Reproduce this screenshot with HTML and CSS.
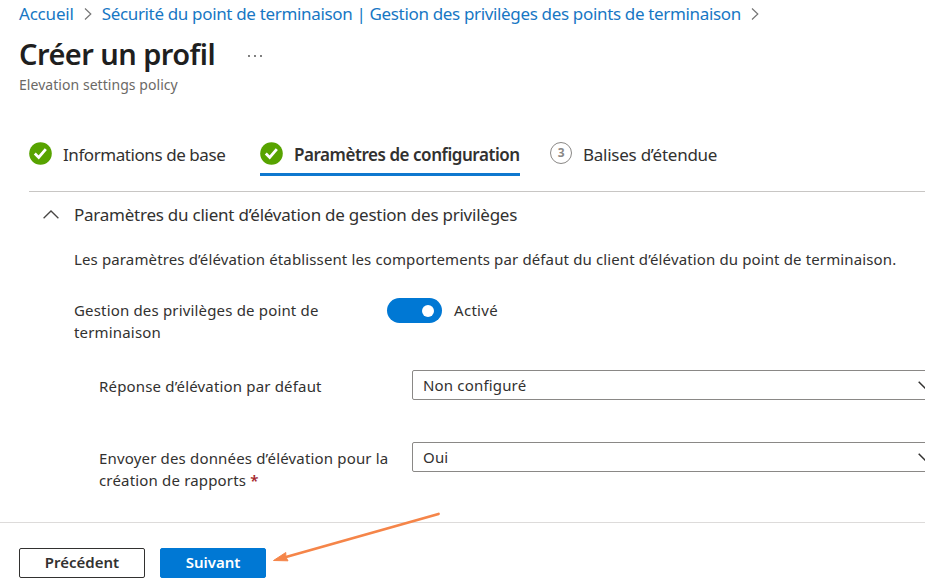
FILE: index.html
```html
<!DOCTYPE html>
<html lang="fr">
<head>
    <meta charset="UTF-8">
    <meta name="viewport" content="width=device-width, initial-scale=1.0">
    <title>Créer un profil</title>
    <link rel="stylesheet" href="styles.css">
</head>
<body>
<div class="page">
    <nav class="breadcrumb">
        <a class="crumb-home" href="#">Accueil</a>
        <svg class="sep" width="8" height="12" viewBox="0 0 8 12"><path d="M1 0.5L6.8 6L1 11.5"/></svg>
        <a class="crumb-long" href="#">Sécurité du point de terminaison | Gestion des privilèges des points de terminaison</a>
        <svg class="sep" width="8" height="12" viewBox="0 0 8 12"><path d="M1 0.5L6.8 6L1 11.5"/></svg>
    </nav>

    <header class="header">
        <div class="title-row">
            <h1>Créer un profil</h1>
            <svg class="more" width="16" height="4" viewBox="0 0 16 4"><circle cx="2" cy="2" r="0.9"/><circle cx="8" cy="2" r="0.9"/><circle cx="14" cy="2" r="0.9"/></svg>
        </div>
        <p class="subtitle">Elevation settings policy</p>
    </header>

    <div class="tabs">
        <a class="tab tab-base" href="#">
            <svg class="check" width="23" height="23" viewBox="0 0 23 23"><circle cx="11.5" cy="11.5" r="11.3"/><path d="M5.800 11.600L9.700 15.500L16.800 7.200"/></svg>
            <span>Informations de base</span>
        </a>
        <a class="tab tab-config active" href="#">
            <svg class="check" width="23" height="23" viewBox="0 0 23 23"><circle cx="11.5" cy="11.5" r="11.3"/><path d="M5.800 11.600L9.700 15.500L16.800 7.200"/></svg>
            <span>Paramètres de configuration</span>
        </a>
        <a class="tab tab-scope" href="#">
            <b class="step">3</b>
            <span>Balises d’étendue</span>
        </a>
    </div>

    <main class="content">
        <h2 class="section-title">
            <svg class="chevron-up" width="16" height="9" viewBox="0 0 16 9"><path d="M0.6 8.3L8 1L15.4 8.3"/></svg>
            <span>Paramètres du client d’élévation de gestion des privilèges</span>
        </h2>
        <p class="description">Les paramètres d’élévation établissent les comportements par défaut du client d’élévation du point de terminaison.</p>

        <div class="field field-toggle">
            <div class="label">Gestion des privilèges de point de<br>terminaison</div>
            <div class="toggle-box">
                <span class="toggle"></span>
                <span class="toggle-text">Activé</span>
            </div>
        </div>

        <div class="field field-sub">
            <div class="label">Réponse d’élévation par défaut</div>
            <div class="select">
                <span>Non configuré</span>
                <svg class="chevron-down" width="14" height="8" viewBox="0 0 14 8"><path d="M0.7 0.7L7 7L13.3 0.7"/></svg>
            </div>
        </div>

        <div class="field field-sub">
            <div class="label">Envoyer des données d’élévation pour la<br>création de rapports <b class="required">*</b></div>
            <div class="select">
                <span>Oui</span>
                <svg class="chevron-down" width="14" height="8" viewBox="0 0 14 8"><path d="M0.7 0.7L7 7L13.3 0.7"/></svg>
            </div>
        </div>
    </main>

    <footer class="footer">
        <button class="btn btn-prev">Précédent</button>
        <button class="btn btn-next">Suivant</button>
        <svg class="arrow" width="170" height="54" viewBox="0 0 170 54"><path class="line" d="M166.500 4L14 47"/><path class="head" d="M1.500 50.500L13.800 42.500L13.800 47L16 50.800Z"/></svg>
    </footer>
</div>
</body>
</html>
```
FILE: styles.css
```css
* {
    box-sizing: border-box;
}

body {
    margin: 0;
    background-color: #fff;
    color: #323130;
    font-family: "Noto Sans", "Open Sans", sans-serif;
    font-size: 15px;
    overflow: hidden;
}

a {
    color: inherit;
    text-decoration: none;
}

h1, h2, p {
    margin: 0;
}

svg {
    flex: none;
    fill: none;
}

.page {
    width: 925px;
    height: 587px;
    overflow: hidden;
    display: flex;
    flex-direction: column;
    white-space: nowrap;
}

.breadcrumb {
    display: flex;
    align-items: center;
    height: 28px;
    padding-left: 19px;
    gap: 10px;
    font-size: 17px;
    line-height: 24px;
    color: #1777c4;
}

.crumb-home {
    letter-spacing: -0.2px;
}

.crumb-long {
    letter-spacing: -0.34px;
}

.sep {
    stroke: #767676;
    stroke-width: 1.2;
}

.header {
    height: 114px;
    padding-left: 19px;
}

.title-row {
    display: flex;
    align-items: center;
    gap: 32px;
    height: 52px;
}

h1 {
    font-size: 29px;
    font-weight: 600;
    line-height: 52px;
    letter-spacing: -0.55px;
    color: #1f1f1f;
}

.more {
    fill: #444;
    margin-top: 4px;
}

.subtitle {
    font-size: 14px;
    line-height: 20px;
    letter-spacing: 0.05px;
    margin-top: -5px;
    color: #6b6966;
}

.tabs {
    display: flex;
    height: 50px;
    margin-left: 29px;
    border-bottom: 1px solid #c8c6c4;
    font-size: 17px;
}

.tab {
    display: flex;
    align-items: flex-start;
    gap: 11px;
    height: 34px;
    line-height: 25px;
}

.tab-base {
    width: 201px;
    margin-right: 30px;
    letter-spacing: -0.43px;
}

.tab-config {
    width: 260px;
    margin-right: 30px;
    letter-spacing: -0.45px;
}

.tab-scope {
    letter-spacing: -0.25px;
}

.active {
    font-weight: 600;
    border-bottom: 3px solid #0f78cf;
}

.check {
    fill: #57a300;
}

.check path {
    fill: none;
    stroke: #fff;
    stroke-width: 2.8;
}

.step {
    flex: none;
    width: 22px;
    height: 22px;
    border: 1px solid #8a8886;
    border-radius: 50%;
    font-size: 12px;
    line-height: 20px;
    text-align: center;
    color: #8a8886;
}

.content {
    height: 330px;
    padding-left: 74px;
    line-height: 22px;
    letter-spacing: 0.17px;
}

.section-title {
    display: flex;
    align-items: center;
    gap: 15px;
    height: 46px;
    margin-left: -31px;
    font-size: 17px;
    font-weight: 400;
    letter-spacing: -0.24px;
}

.chevron-up {
    margin-top: -2px;
    stroke: #484644;
    stroke-width: 1.3;
}

.description {
    margin-top: 10px;
    letter-spacing: 0.13px;
}

.field {
    display: flex;
}

.label {
    flex: none;
    width: 313px;
}

.field-toggle {
    margin-top: 29px;
    height: 71px;
}

.toggle-box {
    display: flex;
    align-items: center;
    gap: 12px;
    height: 25px;
    margin-top: -1px;
}

.toggle-text {
    margin-top: -1px;
    letter-spacing: 0.3px;
}

.toggle {
    display: flex;
    align-items: center;
    justify-content: flex-end;
    width: 55px;
    height: 25px;
    padding-right: 8px;
    border-radius: 13px;
    background-color: #0078d4;
}

.toggle::after {
    content: "";
    width: 12px;
    height: 12px;
    border-radius: 50%;
    background-color: #fff;
}

.field-sub {
    height: 72px;
    padding-left: 25px;
}

.field-sub .label {
    padding-top: 5px;
}

.select {
    flex: none;
    display: flex;
    align-items: center;
    justify-content: space-between;
    width: 530px;
    height: 30px;
    padding: 0 9px 0 10px;
    border: 1px solid #8a8886;
    border-radius: 2px;
}

.chevron-down {
    stroke: #323130;
    stroke-width: 1.5;
}

.required {
    color: #a4262c;
    font-weight: 600;
}

.footer {
    display: flex;
    align-items: flex-start;
    height: 65px;
    padding: 25px 0 0 19px;
    border-top: 1px solid #dddbda;
    gap: 15px;
    position: relative;
}

.btn {
    height: 30px;
    padding: 0 0 2px;
    border: 1px solid #323130;
    border-radius: 2px;
    background-color: #fff;
    color: #323130;
    font-family: inherit;
    font-size: 15px;
    font-weight: 600;
    line-height: 26px;
}

.btn-prev {
    width: 126px;
}

.btn-next {
    width: 106px;
    border-color: #0078d4;
    background-color: #0078d4;
    color: #fff;
}

/* pointer drawn over the footer line */
.arrow {
    position: absolute;
    left: 272px;
    top: -13px;
}

.arrow .line {
    stroke: #f58549;
    stroke-width: 2.8;
    stroke-linecap: round;
}

.arrow .head {
    fill: #f58549;
    stroke: #f58549;
    stroke-width: 1;
}
```
